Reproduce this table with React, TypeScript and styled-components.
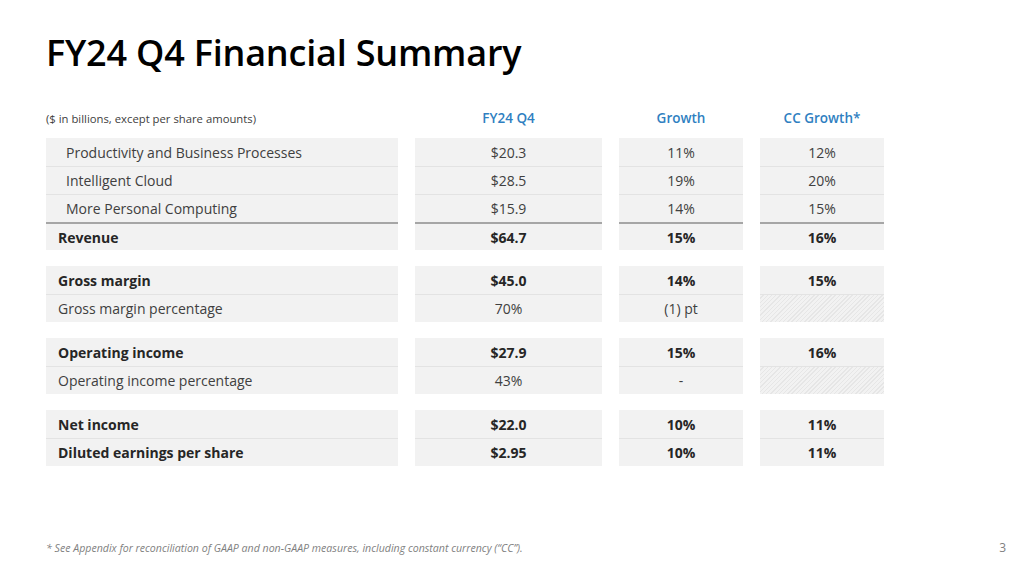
import styled, { createGlobalStyle } from "styled-components";

type Row = {
  label: string;
  q4: string;
  growth: string;
  cc: string | null;
  bold?: boolean;
  indent?: boolean;
  total?: boolean;
};

const groups: Row[][] = [
  [
    { label: "Productivity and Business Processes", q4: "$20.3", growth: "11%", cc: "12%", indent: true },
    { label: "Intelligent Cloud", q4: "$28.5", growth: "19%", cc: "20%", indent: true },
    { label: "More Personal Computing", q4: "$15.9", growth: "14%", cc: "15%", indent: true },
    { label: "Revenue", q4: "$64.7", growth: "15%", cc: "16%", bold: true, total: true },
  ],
  [
    { label: "Gross margin", q4: "$45.0", growth: "14%", cc: "15%", bold: true },
    { label: "Gross margin percentage", q4: "70%", growth: "(1) pt", cc: null },
  ],
  [
    { label: "Operating income", q4: "$27.9", growth: "15%", cc: "16%", bold: true },
    { label: "Operating income percentage", q4: "43%", growth: "-", cc: null },
  ],
  [
    { label: "Net income", q4: "$22.0", growth: "10%", cc: "11%", bold: true },
    { label: "Diluted earnings per share", q4: "$2.95", growth: "10%", cc: "11%", bold: true },
  ],
];

export default function App() {
  return (
    <>
      <GlobalStyle />
      <Slide>
        <Title>FY24 Q4 Financial Summary</Title>
        <Table>
          <HeaderRow>
            <Note>($ in billions, except per share amounts)</Note>
            <ColHead>FY24 Q4</ColHead>
            <ColHead>Growth</ColHead>
            <ColHead>CC Growth*</ColHead>
          </HeaderRow>
          {groups.map((rows, gi) => (
            <Group key={gi}>
              {rows.map((r, ri) => (
                <DataRow key={ri} $first={ri === 0} $total={r.total} $bold={r.bold}>
                  <LabelCell $indent={r.indent}>{r.label}</LabelCell>
                  <Cell>{r.q4}</Cell>
                  <Cell>{r.growth}</Cell>
                  {r.cc === null ? <HatchCell /> : <Cell>{r.cc}</Cell>}
                </DataRow>
              ))}
            </Group>
          ))}
        </Table>
        <Footer>
          <FootNote>
            * See Appendix for reconciliation of GAAP and non-GAAP measures, including constant currency (“CC”).
          </FootNote>
          <PageNum>3</PageNum>
        </Footer>
      </Slide>
    </>
  );
}

const GlobalStyle = createGlobalStyle`
  html, body {
    margin: 0;
    padding: 0;
    background: #fff;
  }
  body {
    font-family: "Open Sans", "Noto Sans", sans-serif;
    color: #404040;
  }
`;

const Slide = styled.div`
  width: 1024px;
  height: 572px;
  box-sizing: border-box;
  padding: 27px 18px 0 46px;
  display: flex;
  flex-direction: column;
  background: #fff;
`;

const Title = styled.h1`
  margin: 0;
  font-size: 36px;
  font-weight: 600;
  line-height: 51px;
  color: #000;
  letter-spacing: -0.2px;
`;

const Table = styled.div`
  margin-top: 30px;
  display: flex;
  flex-direction: column;
  gap: 16px;
  width: 838px;
`;

const gridCols = `
  display: grid;
  grid-template-columns: 352px 187px 124px 124px;
  column-gap: 17px;
`;

const HeaderRow = styled.div`
  ${gridCols}
  height: 20px;
  align-items: center;
  margin-bottom: -6px;
`;

const Note = styled.div`
  font-size: 11.3px;
  color: #404040;
  white-space: nowrap;
`;

const ColHead = styled.div`
  text-align: center;
  font-size: 13.5px;
  font-weight: 600;
  color: #2f7fc1;
`;

const Group = styled.div`
  display: flex;
  flex-direction: column;
`;

const DataRow = styled.div<{ $first?: boolean; $total?: boolean; $bold?: boolean }>`
  ${gridCols}
  height: 28px;
  font-size: 14px;
  font-weight: ${(p) => (p.$bold ? 700 : 400)};
  color: ${(p) => (p.$bold ? "#262626" : "#404040")};

  & > div {
    box-sizing: border-box;
    background: #f2f2f2;
    border-top: ${(p) =>
      p.$first ? "none" : p.$total ? "2px solid #a6a6a6" : "1px solid #e3e3e3"};
  }
`;

const Cell = styled.div`
  display: flex;
  align-items: center;
  justify-content: center;
`;

const LabelCell = styled.div<{ $indent?: boolean }>`
  display: flex;
  align-items: center;
  padding-left: ${(p) => (p.$indent ? "20px" : "12px")};
`;

const HatchCell = styled.div`
  && {
    background: repeating-linear-gradient(
      135deg,
      #f2f2f2 0px,
      #f2f2f2 2px,
      #e6e6e6 2px,
      #e6e6e6 3px
    );
  }
`;

const Footer = styled.div`
  margin-top: auto;
  margin-bottom: 16px;
  display: flex;
  align-items: center;
  justify-content: space-between;
`;

const FootNote = styled.div`
  font-size: 10.6px;
  font-style: italic;
  color: #7f7f7f;
  white-space: nowrap;
`;

const PageNum = styled.div`
  font-size: 12px;
  color: #7f7f7f;
`;
